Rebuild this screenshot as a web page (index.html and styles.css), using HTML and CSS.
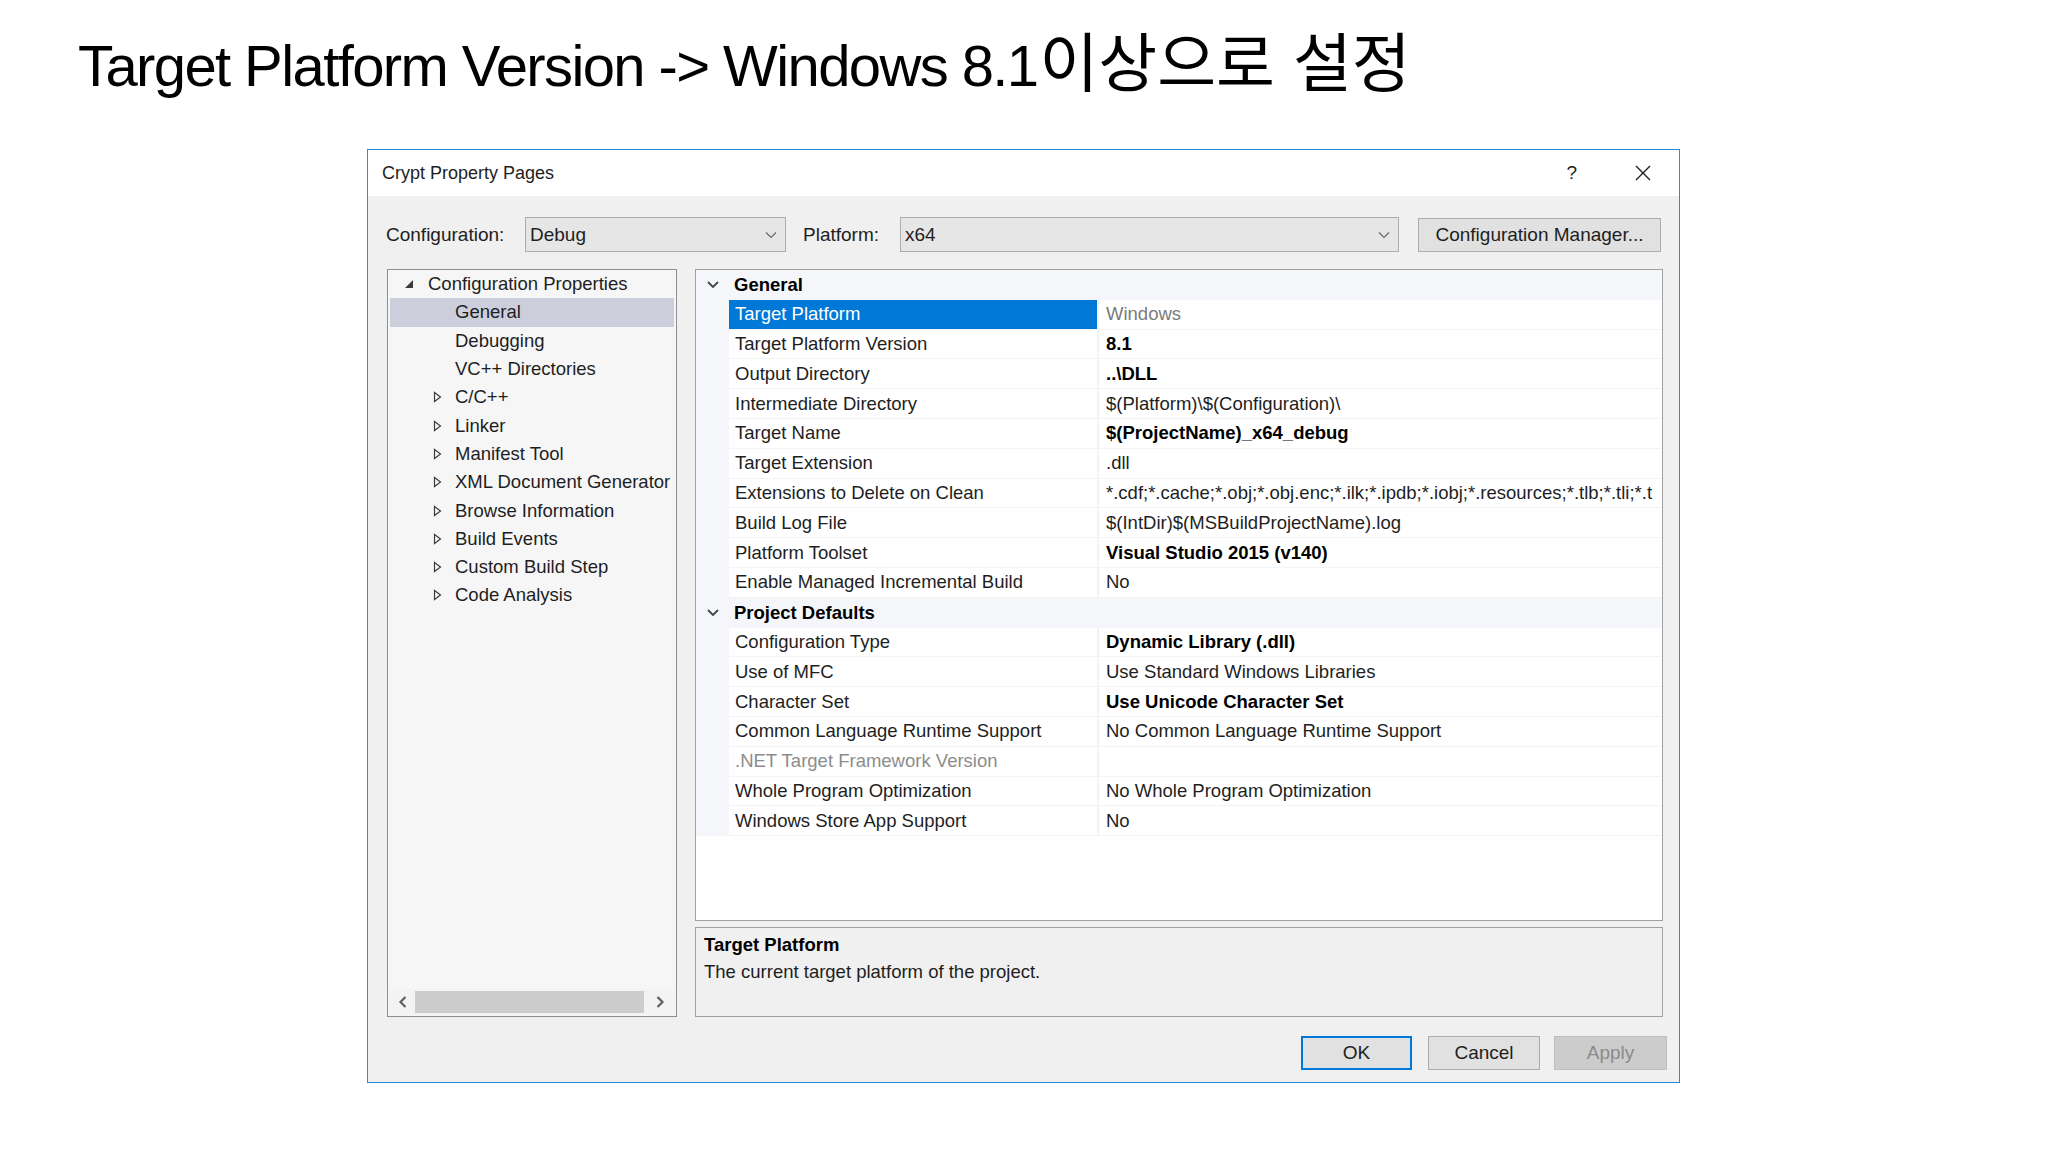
FILE: index.html
```html
<!DOCTYPE html>
<html lang="ko">
<head>
<meta charset="utf-8">
<title>Target Platform Version</title>
<link rel="stylesheet" href="styles.css">
</head>
<body>
<div class="slide">
  <h1 class="heading">Target Platform Version -&gt; Windows 8.1<span class="ko">이상으로 설정</span></h1>

  <div class="dialog">
    <div class="titlebar">
      <span class="dlg-title">Crypt Property Pages</span>
      <span class="help">?</span>
      <svg class="close" width="18" height="18" viewBox="0 0 18 18"><path d="M2 2 L16 16 M16 2 L2 16" stroke="#1e1e1e" stroke-width="1.4" fill="none"/></svg>
    </div>

    <div class="dlg-body">
      <div class="config-row">
        <span class="lbl lbl-config">Configuration:</span>
        <div class="combo combo-config">
          <span>Debug</span>
          <svg class="chev" width="12" height="8" viewBox="0 0 12 8"><path d="M1 1.5 L6 6.5 L11 1.5" stroke="#6a6a6a" stroke-width="1.2" fill="none"/></svg>
        </div>
        <span class="lbl lbl-platform">Platform:</span>
        <div class="combo combo-platform">
          <span>x64</span>
          <svg class="chev" width="12" height="8" viewBox="0 0 12 8"><path d="M1 1.5 L6 6.5 L11 1.5" stroke="#6a6a6a" stroke-width="1.2" fill="none"/></svg>
        </div>
        <div class="btn btn-cfgmgr">Configuration Manager...</div>
      </div>

      <div class="main">
        <div class="tree">
          <div class="tree-list">
            <div class="tnode root">
              <svg class="exp" width="10" height="10" viewBox="0 0 10 10"><polygon points="9,1 9,9 1,9" fill="#3c3c3c"/></svg>
              <span>Configuration Properties</span>
            </div>
            <div class="tnode child selected"><span>General</span></div>
            <div class="tnode child"><span>Debugging</span></div>
            <div class="tnode child"><span>VC++ Directories</span></div>
            <div class="tnode child coll"><svg class="tri" width="9" height="12" viewBox="0 0 9 12"><polygon points="1.5,1.5 7.5,6 1.5,10.5" fill="none" stroke="#3c3c3c" stroke-width="1.2"/></svg><span>C/C++</span></div>
            <div class="tnode child coll"><svg class="tri" width="9" height="12" viewBox="0 0 9 12"><polygon points="1.5,1.5 7.5,6 1.5,10.5" fill="none" stroke="#3c3c3c" stroke-width="1.2"/></svg><span>Linker</span></div>
            <div class="tnode child coll"><svg class="tri" width="9" height="12" viewBox="0 0 9 12"><polygon points="1.5,1.5 7.5,6 1.5,10.5" fill="none" stroke="#3c3c3c" stroke-width="1.2"/></svg><span>Manifest Tool</span></div>
            <div class="tnode child coll"><svg class="tri" width="9" height="12" viewBox="0 0 9 12"><polygon points="1.5,1.5 7.5,6 1.5,10.5" fill="none" stroke="#3c3c3c" stroke-width="1.2"/></svg><span>XML Document Generator</span></div>
            <div class="tnode child coll"><svg class="tri" width="9" height="12" viewBox="0 0 9 12"><polygon points="1.5,1.5 7.5,6 1.5,10.5" fill="none" stroke="#3c3c3c" stroke-width="1.2"/></svg><span>Browse Information</span></div>
            <div class="tnode child coll"><svg class="tri" width="9" height="12" viewBox="0 0 9 12"><polygon points="1.5,1.5 7.5,6 1.5,10.5" fill="none" stroke="#3c3c3c" stroke-width="1.2"/></svg><span>Build Events</span></div>
            <div class="tnode child coll"><svg class="tri" width="9" height="12" viewBox="0 0 9 12"><polygon points="1.5,1.5 7.5,6 1.5,10.5" fill="none" stroke="#3c3c3c" stroke-width="1.2"/></svg><span>Custom Build Step</span></div>
            <div class="tnode child coll"><svg class="tri" width="9" height="12" viewBox="0 0 9 12"><polygon points="1.5,1.5 7.5,6 1.5,10.5" fill="none" stroke="#3c3c3c" stroke-width="1.2"/></svg><span>Code Analysis</span></div>
          </div>
          <div class="hscroll">
            <svg class="sarrow" width="12" height="14" viewBox="0 0 12 14"><path d="M8.5 2 L3.5 7 L8.5 12" stroke="#606060" stroke-width="2.2" fill="none"/></svg>
            <div class="thumb"></div>
            <svg class="sarrow" width="12" height="14" viewBox="0 0 12 14"><path d="M3.5 2 L8.5 7 L3.5 12" stroke="#606060" stroke-width="2.2" fill="none"/></svg>
          </div>
        </div>

        <div class="right">
          <div class="grid">
            <div class="cat">
              <div class="gut"><svg width="14" height="9" viewBox="0 0 14 9"><path d="M2 2 L7 7 L12 2" stroke="#444" stroke-width="1.8" fill="none"/></svg></div>
              <span class="cat-name">General</span>
            </div>
            <div class="prow"><div class="gut"></div><div class="pname sel">Target Platform</div><div class="pval dim">Windows</div></div>
            <div class="prow"><div class="gut"></div><div class="pname">Target Platform Version</div><div class="pval b">8.1</div></div>
            <div class="prow"><div class="gut"></div><div class="pname">Output Directory</div><div class="pval b">..\DLL</div></div>
            <div class="prow"><div class="gut"></div><div class="pname">Intermediate Directory</div><div class="pval">$(Platform)\$(Configuration)\</div></div>
            <div class="prow"><div class="gut"></div><div class="pname">Target Name</div><div class="pval b">$(ProjectName)_x64_debug</div></div>
            <div class="prow"><div class="gut"></div><div class="pname">Target Extension</div><div class="pval">.dll</div></div>
            <div class="prow"><div class="gut"></div><div class="pname">Extensions to Delete on Clean</div><div class="pval">*.cdf;*.cache;*.obj;*.obj.enc;*.ilk;*.ipdb;*.iobj;*.resources;*.tlb;*.tli;*.t</div></div>
            <div class="prow"><div class="gut"></div><div class="pname">Build Log File</div><div class="pval">$(IntDir)$(MSBuildProjectName).log</div></div>
            <div class="prow"><div class="gut"></div><div class="pname">Platform Toolset</div><div class="pval b">Visual Studio 2015 (v140)</div></div>
            <div class="prow"><div class="gut"></div><div class="pname">Enable Managed Incremental Build</div><div class="pval">No</div></div>
            <div class="cat">
              <div class="gut"><svg width="14" height="9" viewBox="0 0 14 9"><path d="M2 2 L7 7 L12 2" stroke="#444" stroke-width="1.8" fill="none"/></svg></div>
              <span class="cat-name">Project Defaults</span>
            </div>
            <div class="prow"><div class="gut"></div><div class="pname">Configuration Type</div><div class="pval b">Dynamic Library (.dll)</div></div>
            <div class="prow"><div class="gut"></div><div class="pname">Use of MFC</div><div class="pval">Use Standard Windows Libraries</div></div>
            <div class="prow"><div class="gut"></div><div class="pname">Character Set</div><div class="pval b">Use Unicode Character Set</div></div>
            <div class="prow"><div class="gut"></div><div class="pname">Common Language Runtime Support</div><div class="pval">No Common Language Runtime Support</div></div>
            <div class="prow"><div class="gut"></div><div class="pname dim">.NET Target Framework Version</div><div class="pval"></div></div>
            <div class="prow"><div class="gut"></div><div class="pname">Whole Program Optimization</div><div class="pval">No Whole Program Optimization</div></div>
            <div class="prow"><div class="gut"></div><div class="pname">Windows Store App Support</div><div class="pval">No</div></div>
          </div>
          <div class="desc">
            <div class="desc-title">Target Platform</div>
            <div class="desc-text">The current target platform of the project.</div>
          </div>
        </div>
      </div>

      <div class="buttons">
        <div class="btn btn-ok">OK</div>
        <div class="btn btn-cancel">Cancel</div>
        <div class="btn btn-apply">Apply</div>
      </div>
    </div>
  </div>
</div>
</body>
</html>
```

FILE: styles.css
```css
* { box-sizing: border-box; }

html, body {
  margin: 0;
  padding: 0;
  background: #ffffff;
}

body {
  width: 2048px;
  height: 1152px;
  overflow: hidden;
  font-family: "Liberation Sans", Arial, sans-serif;
  color: #1e1e1e;
}

.slide {
  padding-top: 26px;
}

.heading {
  margin: 0 0 59px 78px;
  font-family: "Liberation Sans", "Noto Sans CJK KR", sans-serif;
  font-weight: normal;
  font-size: 58px;
  letter-spacing: -1.6px;
  line-height: 64px;
  height: 64px;
  color: #000;
  white-space: nowrap;
}

.ko {
  font-family: "Noto Sans CJK KR", sans-serif;
  font-size: 64px;
  line-height: 64px;
  letter-spacing: 0;
  margin-left: 2px;
}

.dialog {
  margin-left: 367px;
  width: 1313px;
  height: 934px;
  border: 1px solid #2a8ad8;
  background: #f0f0f0;
  display: flex;
  flex-direction: column;
}

.titlebar {
  height: 46px;
  background: #ffffff;
  display: flex;
  align-items: center;
  padding-left: 14px;
  flex-shrink: 0;
}

.dlg-title {
  font-size: 18px;
  color: #1e1e1e;
  flex: 1;
}

.help {
  font-size: 19px;
  color: #1e1e1e;
  margin-right: 57px;
}

.close {
  margin-right: 27px;
}

.dlg-body {
  flex: 1;
  display: flex;
  flex-direction: column;
  padding: 21px 12px 12px 18px;
}

.config-row {
  height: 35px;
  display: flex;
  align-items: center;
  font-size: 19px;
}

.lbl {
  color: #1e1e1e;
  flex-shrink: 0;
}

.lbl-config {
  width: 139px;
}

.lbl-platform {
  margin-left: 17px;
  width: 97px;
}

.combo {
  height: 35px;
  flex-shrink: 0;
  background: #e6e6e6;
  border: 1px solid #acacac;
  display: flex;
  align-items: center;
  justify-content: space-between;
  padding: 0 8px 0 4px;
}

.combo-config { width: 261px; }
.combo-platform { width: 499px; }

.btn {
  display: flex;
  align-items: center;
  justify-content: center;
  flex-shrink: 0;
  background: #e1e1e1;
  border: 1px solid #adadad;
  font-size: 19px;
  color: #1e1e1e;
}

.btn-cfgmgr {
  margin-left: 19px;
  width: 243px;
  height: 34px;
}

.main {
  margin-top: 17px;
  height: 748px;
  display: flex;
  gap: 18px;
  margin-right: 4px;
}

.tree {
  width: 290px;
  flex-shrink: 0;
  margin-left: 1px;
  border: 1px solid #8e8e8e;
  background: #f6f6f7;
  display: flex;
  flex-direction: column;
  font-size: 18.5px;
}

.tree-list {
  flex: 1;
  padding: 0 2px;
}

.tnode {
  height: 28.3px;
  display: flex;
  align-items: center;
  white-space: nowrap;
  color: #1e1e1e;
}

.tnode.root {
  padding-left: 14px;
}

.tnode.root .exp {
  margin-right: 14px;
}

.tnode.child {
  padding-left: 65px;
}

.tnode.child.coll {
  padding-left: 43px;
}

.tnode .tri {
  margin-right: 13px;
}

.tnode.selected {
  background: #cccfdb;
}

.hscroll {
  height: 26px;
  margin: 0 1px 1px 1px;
  display: flex;
  align-items: center;
  background: #f3f3f3;
}

.sarrow {
  margin: 0 6px 0 8px;
}

.sarrow:last-child {
  margin: 0 9px 0 4px;
}

.thumb {
  flex: 1;
  height: 22px;
  background: #cdcdcd;
  margin: 0 6px 0 0;
}

.right {
  width: 968px;
  min-width: 0;
  flex-shrink: 0;
  display: flex;
  flex-direction: column;
  gap: 6px;
}

.grid {
  height: 652px;
  border: 1px solid #a0a0a0;
  background: #ffffff;
  font-size: 18.5px;
  overflow: hidden;
}

.cat, .prow {
  height: 29.8px;
  display: flex;
  align-items: stretch;
}

.cat {
  background: #f4f6fa;
}

.gut {
  width: 33px;
  flex-shrink: 0;
  background: #f4f6fa;
  display: flex;
  align-items: center;
  justify-content: center;
}

.cat-name {
  font-weight: bold;
  display: flex;
  align-items: center;
  padding-left: 5px;
  color: #000;
}

.pname {
  width: 368px;
  flex-shrink: 0;
  display: flex;
  align-items: center;
  padding-left: 6px;
  white-space: nowrap;
  border-bottom: 1px solid #f3f3f3;
  color: #1e1e1e;
}

.pname.sel {
  background: #0078d7;
  color: #ffffff;
}

.pname.dim {
  color: #8c8c8c;
}

.pval {
  flex: 1;
  min-width: 0;
  display: flex;
  align-items: center;
  padding-left: 7px;
  white-space: nowrap;
  overflow: hidden;
  border-left: 2px solid #f3f3f3;
  border-bottom: 1px solid #f3f3f3;
  color: #1e1e1e;
}

.pval.b {
  font-weight: bold;
  color: #000;
}

.pval.dim {
  color: #7a7a7a;
}

.desc {
  height: 90px;
  border: 1px solid #a0a0a0;
  background: #f0f0f0;
  padding: 4px 8px;
  font-size: 18.5px;
}

.desc-title {
  font-weight: bold;
  height: 26px;
  line-height: 26px;
  color: #000;
}

.desc-text {
  height: 28px;
  line-height: 28px;
}

.buttons {
  margin-top: 19px;
  height: 34px;
  display: flex;
  justify-content: flex-end;
}

.btn-ok {
  width: 111px;
  border: 2px solid #0078d7;
}

.btn-cancel {
  width: 112px;
  margin-left: 16px;
}

.btn-apply {
  width: 113px;
  margin-left: 14px;
  background: #cccccc;
  border-color: #bfbfbf;
  color: #8a8a8a;
}
```
